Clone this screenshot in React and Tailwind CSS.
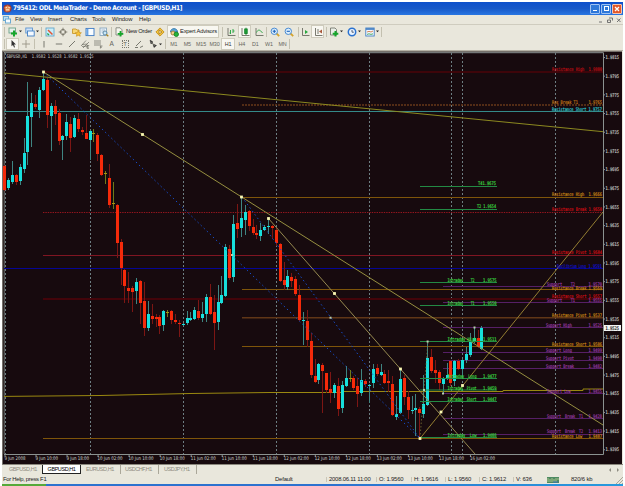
import React from "react";

// candle rows: high, body top, body bottom, low, colour (c = up, r = down, y = doji)
const CANDLES = `
165 166 190 191 r|178 180 188 190 c|161 175 182 184 c|174 175 182 185 r|164 167 181 185 c|138 153 169 173 c
82 116 152 165 c|93 103 117 147 c|95 104 107 109 r|87 90 110 118 c|72 79 90 91 c|78 80 115 128 r
103 106 116 151 c|100 106 114 125 r|109 113 141 145 r|135 136 140 160 c|114 122 136 140 c|117 124 138 152 r
115 118 137 138 c|113 119 129 132 r|127 130 132 135 r|115 133 139 139 r|130 131 140 160 c|129 133 134 142 y
133 135 154 161 r|154 155 175 176 r|171 173 174 184 y|164 178 205 208 r|182 203 204 209 y|204 205 243 258 r
239 242 268 285 r|269 270 286 303 r|272 288 291 303 r|286 288 292 312 r|278 282 291 304 c|280 281 303 324 r
282 301 328 336 r|301 314 328 331 c|304 316 319 324 r|314 317 319 327 r|315 317 326 334 r|310 311 325 331 c
310 312 313 317 y|310 311 320 324 r|314 320 322 324 r|320 323 324 337 r|323 324 325 326 c|311 318 323 325 c
312 318 320 321 c|307 310 319 320 c|300 311 318 320 r|302 314 318 322 c|294 297 314 322 c|284 297 314 315 r
295 312 323 350 r|285 302 322 330 c|276 295 303 304 c|244 247 296 297 c|245 249 278 280 r|215 224 277 282 c
204 223 229 238 r|197 218 228 237 c|205 212 220 235 c|210 211 226 231 r|219 227 233 235 r|225 233 235 239 r
223 230 236 241 c|225 227 230 231 c|218 226 227 234 c|225 226 228 239 r|228 230 243 246 r|243 244 281 282 r
262 280 285 290 r|270 276 287 290 c|273 277 281 287 r|276 279 294 296 r|285 295 320 321 r|312 320 321 345 c
310 321 340 347 r|333 341 375 378 r|359 376 382 383 r|363 364 380 384 c|363 365 371 413 r|373 373 390 393 r
372 389 393 403 r|383 385 393 398 c|378 386 409 416 r|381 385 408 413 c|366 378 386 387 c|370 378 379 382 y
376 378 388 390 r|378 386 394 407 r|369 380 393 396 c|379 381 384 387 r|384 385 386 403 c|364 369 383 388 c
364 368 374 376 r|364 372 375 376 c|370 374 383 384 r|370 381 383 392 r|376 384 415 416 r|396 414 417 420 c
369 379 413 414 c|375 378 397 405 r|391 397 410 419 r|396 410 411 414 c|394 408 410 436 c|407 409 413 438 r
375 404 414 418 c|341 358 405 406 c|349 357 371 373 r|360 370 373 383 r|370 372 383 390 r|377 379 384 394 c
363 375 379 380 c|360 361 383 386 r|360 361 381 386 c|359 361 369 370 r|359 360 369 378 c|347 354 360 363 c
333 342 355 357 c|327 338 342 343 c|330 338 347 348 r|326 328 349 350 c`
  .trim()
  .split(/[|\n]/)
  .map((row) => {
    const [high, top, bottom, low, kind] = row.split(" ");
    return { high: +high, top: +top, bottom: +bottom, low: +low, kind };
  });

const BODY = { c: "#17dfdc", r: "#f52a0a", y: "#a8960f" };
const WICK = { c: "#3f8582", r: "#7c1614", y: "#6f7a18" };

// y, x start, colour, thickness, dash
const LEVELS = [
  [72, 43, "#4c040a", 1.6],
  [105, 242, "#67391a", 1.3, "2 1"],
  [111.5, 4, "#348a89", 1],
  [197.5, 242, "#7f550a", 1],
  [212.5, 43, "#94151e", 1, "1.4 1"],
  [255.5, 43, "#801522", 1],
  [268.5, 4, "#050594", 1.2],
  [289.5, 242, "#7f550a", 1],
  [299, 43, "#43040a", 2],
  [317.7, 242, "#603617", 1.5],
  [346.5, 242, "#7f550a", 1],
  [438.5, 43, "#7f550a", 1]
];

const RIGHT_LABELS = [
  [71, 552, "Resistance High", "1.9800", "#b80a12"],
  [104, 552, "Res Break T1", "1.9765", "#c07416"],
  [110.5, 552, "Resistance Short", "1.9757", "#2bc0c8"],
  [196.3, 552, "Resistance High", "1.9666", "#c68214"],
  [211.3, 552, "Resistance Break", "1.9650", "#c80a12"],
  [254.3, 552, "Resistance Pivot", "1.9604", "#c80a12"],
  [267.5, 557, "Equilibrium Long", "1.9591", "#1010c4"],
  [285.7, 547, "Support    T2", "1.9570", "#93389f"],
  [289.8, 552, "Resistance Break", "1.9569", "#c68214"],
  [298, 552, "Resistance Short", "1.9557", "#c80a12"],
  [302, 547, "Support    T1", "1.9555", "#93389f"],
  [317, 552, "Resistance Pivot", "1.9537", "#c68214"],
  [326.5, 546, "Support High", "1.9525", "#93389f"],
  [345.7, 552, "Resistance Short", "1.9506", "#c68214"],
  [352, 546, "Support Long", "1.9499", "#93389f"],
  [359.5, 546, "Support Pivot", "1.9490", "#93389f"],
  [367.5, 546, "Support Break", "1.9482", "#93389f"],
  [392.5, 547, "Support Low", "1.9455", "#93389f"],
  [417.5, 547, "Support  Break  T1", "1.9428", "#93389f"],
  [433.3, 547, "Support  Break  T2", "1.9413", "#93389f"],
  [438, 552, "Resistance Low", "1.9407", "#c68214"]
];

const INTRADAY = [
  [282.5, "Intraday    T2", "1.9575"],
  [305.5, "Intraday    T1", "1.9550"],
  [341.5, "Intraday High", "1.9511"],
  [378.5, "Intraday  Long", "1.9477"],
  [390, "Intraday  Pivot", "1.9459"],
  [401.5, "Intraday  Short", "1.9447"],
  [437.5, "Intraday  Low", "1.9408"]
];

const SUPPORTS = [286.5, 302.5, 327.5, 352.5, 360.5, 368.5, 393.5, 418.5, 434.5];
const SEPARATORS = [5.5, 90.5, 183.5, 276.5, 369.5, 451.5, 462.5, 555.5];

const TIMES = [
  "9 Jun 2008", "9 Jun 10:00", "9 Jun 18:00", "10 Jun 02:00", "10 Jun 10:00", "10 Jun 18:00",
  "11 Jun 02:00", "11 Jun 10:00", "11 Jun 18:00", "12 Jun 02:00", "12 Jun 10:00", "12 Jun 18:00",
  "13 Jun 02:00", "13 Jun 10:00", "13 Jun 18:00", "16 Jun 02:00"
];

const HANDLES = [[43.5, 72], [142.5, 134.5], [241.5, 197], [268.5, 218.5], [334.5, 293.5], [400.5, 369], [420, 438.5], [441, 412], [462.5, 385.5]];
const SMALL_HANDLES = [[232, 255], [330.5, 317.7], [427.6, 341.5], [474.5, 327.5], [424, 390], [443, 393.5]];

function Label({ x, y, w, fill, weight = 0.2, children }) {
  return (
    <text
      x={x}
      y={y}
      fontSize="4.9"
      fill={fill}
      stroke={fill}
      strokeWidth={weight}
      textLength={w}
      lengthAdjust="spacingAndGlyphs"
      xmlSpace="preserve"
    >
      {children}
    </text>
  );
}

function Chart() {
  return (
    <svg viewBox="2 51 620 413" className="block h-[413px] w-[620px]" fontFamily="'DejaVu Sans Mono', monospace">
      <rect x="2" y="51" width="620" height="413" fill="#170a0e" />
      <path d="M2 51.5H622M2.5 51V464" stroke="#75706a" />
      <path d="M4 52.7H603.5V454.5H4" fill="none" stroke="#8b9290" />
      <path d="M4.2 52V454" stroke="#99a19b" strokeWidth="0.7" />

      {SEPARATORS.map((x) => (
        <line key={x} x1={x} x2={x} y1="53" y2="454" stroke="#6d7e82" strokeWidth="1" strokeDasharray="2 2" />
      ))}

      {LEVELS.map(([y, x, stroke, width, dash]) => (
        <line key={y} x1={x} x2="603" y1={y} y2={y} stroke={stroke} strokeWidth={width} strokeDasharray={dash} />
      ))}
      {SUPPORTS.map((y) => (
        <line key={y} x1="443" x2="603" y1={y} y2={y} stroke="#561f66" />
      ))}
      <path d="M4 396.4L100 395.5L190 393.5L270 392.5H343V391.5H503V390.5H583V389H603" fill="none" stroke="#9a8810" />

      <g shapeRendering="crispEdges">
        {CANDLES.map((candle, i) => {
          const x = Math.round(4.7 + i * 3.88 - 0.5);
          return (
            <g key={i}>
              <rect
                x={x}
                y={candle.high}
                width="1"
                height={candle.low - candle.high}
                fill={WICK[candle.kind]}
              />
              <rect
                x={x - 1}
                y={candle.top}
                width={candle.kind === "y" ? 3 : 2.6}
                height={Math.max(1, candle.bottom - candle.top)}
                fill={BODY[candle.kind]}
              />
            </g>
          );
        })}
      </g>

      <g fill="none" strokeWidth="1">
        <path d="M4 73L603 131.7" stroke="#8c8920" />
        <path d="M43.5 72L603 425" stroke="#968f40" />
        <path d="M268.5 218.5L475 454" stroke="#968950" />
        <path d="M420 438.5L603 212" stroke="#947e32" />
        <path d="M43.5 72L420 438.5M242 197L420 438.5" stroke="#164cc8" strokeDasharray="1.5 2.8" />
        <path d="M420 438L428 341" stroke="#86803a" strokeDasharray="1.5 2" strokeWidth="0.7" />
      </g>

      {[186.5, 209.5, ...INTRADAY.map((row) => row[0])].map((y) => (
        <line key={y} x1="420" x2="497" y1={y} y2={y} stroke="#238a44" />
      ))}
      <Label x={478} y={185.3} w={18} fill="#3ad440">T41.9675</Label>
      <Label x={477} y={208.3} w={19} fill="#3ad440">T2 1.9654</Label>
      {INTRADAY.map(([y, name, price]) => (
        <g key={name}>
          <Label x={447.5} y={y - 0.5} w={name.includes(" T") ? 27 : 29} fill="#3ad440">{name}</Label>
          <Label x={483} y={y - 0.5} w={13.5} fill="#3ad440">{price}</Label>
        </g>
      ))}
      {RIGHT_LABELS.map(([y, x, name, price, fill]) => (
        <g key={y}>
          <Label x={x} y={y} w={Math.min(name.length * 2.15, x === 557 ? 29 : 36)} fill={fill}>{name}</Label>
          <Label x={588.5} y={y} w={13.5} fill={fill}>{price}</Label>
        </g>
      ))}

      {HANDLES.map(([x, y]) => (
        <rect key={x} x={x - 1.4} y={y - 1.4} width="2.8" height="2.8" fill="#fbf9b4" />
      ))}
      {SMALL_HANDLES.map(([x, y]) => (
        <rect key={x} x={x - 1} y={y - 1} width="2" height="2" fill="#b9cdb0" />
      ))}

      <Label x={6.5} y={58.3} w={87} fill="#b4b8b4" weight={0.1}>GBPUSD,H1  1.9502 1.9528 1.9502 1.9525</Label>

      {Array.from({ length: 22 }, (_, i) => (
        <g key={i}>
          <path d={`M603 ${57.5 + i * 18.68}h2`} stroke="#8b9290" />
          <Label x={605.5} y={59.2 + i * 18.68} w={13.5} fill="#c8ccc8" weight={0.15}>
            {(1.9815 - i * 0.002).toFixed(4)}
          </Label>
        </g>
      ))}
      <rect x="604" y="325" width="17" height="6" fill="#f4f4f4" />
      <Label x={605.5} y={329.8} w={13.5} fill="#111">1.9525</Label>

      <g fontFamily="'DejaVu Sans Condensed', 'DejaVu Sans', sans-serif">
        {TIMES.map((time, i) => (
          <g key={time}>
            <path d={`M${5 + i * 31.03} 454v3`} stroke="#8b9290" />
            <Label x={4.5 + i * 31.03} y={460.4} w={i === 0 ? 21 : i < 3 ? 22.5 : 25} fill="#c0c4c0" weight={0.05}>
              {time}
            </Label>
          </g>
        ))}
      </g>
    </svg>
  );
}

function Icon({ children }) {
  return (
    <svg viewBox="0 0 10 10" className="h-[10px] w-[10px] shrink-0" fill="none" stroke="#6b6c62" strokeWidth="0.9">
      {children}
    </svg>
  );
}

function Cell({ className = "", children }) {
  return <div className={"flex h-full shrink-0 items-center justify-center " + className}>{children}</div>;
}

function Caret() {
  return (
    <svg viewBox="0 0 4 3" className="ml-px h-[3px] w-[3px] shrink-0">
      <path d="M0 0H4L2 2.5Z" fill="#222" />
    </svg>
  );
}

function Divider({ className = "" }) {
  return <div className={"h-[10px] w-px shrink-0 bg-[#c3c0b0] " + className} />;
}

const PRESSED = "border border-[#cfccbd] bg-[#f8f7f1]";

function MainToolbar() {
  return (
    <div className="flex h-[14px] items-center border-t border-[#cfccbf] text-[5.8px] tracking-[-0.22px]">
      <Divider className="ml-[2px] mr-[2px]" />
      <Cell className="w-[16px]">
        <Icon>
          <rect x="1" y="1" width="6.5" height="5" fill="#e7f1ec" stroke="#69a189" />
          <path d="M6 3.5V9.5M3 6.5H9" stroke="#16a62b" strokeWidth="2" />
        </Icon>
        <Caret />
      </Cell>
      <Cell className="w-[17px]">
        <Icon>
          <rect x="0.8" y="1" width="6.7" height="5" fill="#cfe3fa" stroke="#5e94cf" />
          <rect x="2.5" y="4" width="6.7" height="5" fill="#f4f9ff" stroke="#427fc4" />
        </Icon>
        <Caret />
      </Cell>
      <Divider className="ml-[1px] mr-[1px]" />
      <Cell className="w-[13px]">
        <Icon>
          <rect x="1" y="1" width="8" height="8" fill="#c9eefa" stroke="#67a6c9" />
          <path d="M3 3L7.5 7.5" stroke="#e25535" strokeWidth="1.5" />
          <path d="M2.3 6.5L4 8" stroke="#21a54d" strokeWidth="1.3" />
        </Icon>
      </Cell>
      <Cell className="w-[14px]">
        <Icon>
          <circle cx="5" cy="5" r="2.6" stroke="#777468" />
          <path d="M5 0.7V4M5 6V9.3M0.7 5H4M6 5H9.3" stroke="#777468" />
        </Icon>
      </Cell>
      <Cell className="w-[13px]">
        <Icon>
          <path d="M0.5 2H4L5 3H7V6.5H0.5Z" fill="#f7d774" stroke="#c8992d" />
          <path d="M6.3 3.6L7.2 5.5L9.4 5.8L7.8 7.2L8.2 9.3L6.3 8.3L4.4 9.3L4.8 7.2L3.2 5.8L5.4 5.5Z" fill="#f8c537" stroke="#c58b1f" strokeWidth="0.6" />
        </Icon>
      </Cell>
      <Cell className="w-[14px]">
        <Icon>
          <rect x="1" y="1.4" width="8" height="7.2" fill="#fafdff" stroke="#3b78c4" />
          <path d="M2.4 2V8" stroke="#69a4e4" strokeWidth="2" />
        </Icon>
      </Cell>
      <Cell className="w-[13px]">
        <Icon>
          <rect x="1" y="1" width="6.5" height="7.5" fill="#edf5fb" stroke="#8aa7bd" />
          <path d="M2.5 3H6M2.5 5H5" stroke="#8aa7bd" strokeWidth="0.7" />
          <circle cx="6" cy="6" r="2" fill="#c9e8f8" stroke="#55809d" />
          <path d="M7.4 7.4L9.3 9.3" stroke="#ad831d" strokeWidth="1.3" />
        </Icon>
      </Cell>
      <Divider className="ml-[1px] mr-[2px]" />
      <Cell className="w-[38px] gap-[2px] whitespace-nowrap">
        <Icon>
          <path d="M2 0.8H6L8 2.8V8H2Z" fill="#f6f6ef" stroke="#85867d" />
          <path d="M6.5 4V9.5M3.7 6.8H9.3" stroke="#16a62b" strokeWidth="1.8" />
        </Icon>
        New Order
      </Cell>
      <Cell className="w-[15px]">
        <Icon>
          <path d="M5 0.9L9.1 5L5 9.1L0.9 5Z" fill="#f4c63e" stroke="#c48e17" />
          <path d="M4 3L7 5L4 7Z" fill="#f9e7a8" stroke="#8f5f13" strokeWidth="0.6" />
        </Icon>
      </Cell>
      <Cell className={"w-[52px] gap-[1px] whitespace-nowrap " + PRESSED}>
        <Icon>
          <path d="M1.5 5C1.5 0.5 8.5 0.5 8.5 5Z" fill="#57a8de" stroke="#2c70a3" />
          <circle cx="4" cy="6" r="2" fill="#f3d08b" stroke="#9c7a38" />
          <circle cx="7.3" cy="7.3" r="2.2" fill="#26b23a" stroke="#158826" />
        </Icon>
        Expert Advisors
      </Cell>
      <Divider className="ml-[3px] mr-[2px]" />
      <Cell className="w-[12px]">
        <Icon>
          <path d="M2 1V8.5H9.5" />
          <path d="M4.5 3V7M7 2V6M7 4H8.5M3.5 6H4.5" stroke="#1da33a" />
        </Icon>
      </Cell>
      <Cell className={"ml-px w-[13px] " + PRESSED}>
        <Icon>
          <path d="M2 1V8.5H9.5" />
          <rect x="4.7" y="2" width="2.5" height="4.5" fill="#29b444" stroke="#15842b" />
          <path d="M6 0.7V8" stroke="#15842b" />
        </Icon>
      </Cell>
      <Cell className="w-[15px]">
        <Icon>
          <path d="M2 1V8.5H9.5" />
          <path d="M2.5 5.5C4 2 6 2.5 8.5 6" stroke="#27a442" />
        </Icon>
      </Cell>
      <Divider className="mr-px" />
      <Cell className="w-[14px]">
        <Icon>
          <path d="M6.4 6.4L9.2 9.2" stroke="#d5a32a" strokeWidth="1.8" />
          <circle cx="4.3" cy="4.3" r="3.2" fill="#dceffd" stroke="#3b80cd" />
          <path d="M4.3 2.7V5.9M2.7 4.3H5.9" stroke="#1e64bd" strokeWidth="1.1" />
        </Icon>
      </Cell>
      <Cell className="w-[13px]">
        <Icon>
          <path d="M6.4 6.4L9.2 9.2" stroke="#d5a32a" strokeWidth="1.8" />
          <circle cx="4.3" cy="4.3" r="3.2" fill="#dceffd" stroke="#3b80cd" />
          <path d="M2.7 4.3H5.9" stroke="#1e64bd" strokeWidth="1.1" />
        </Icon>
      </Cell>
      <Divider className="ml-[3px]" />
      <Cell className="w-[12px]">
        <Icon>
          <path d="M2.5 1V8.5H9.5" />
          <path d="M5 3L8 5L5 7Z" fill="#25a73d" stroke="none" />
        </Icon>
      </Cell>
      <Cell className={"w-[13px] " + PRESSED}>
        <Icon>
          <path d="M2.5 1V8.5H9.5M5 2V7" />
          <path d="M9 2.5L6 4.5L9 6.5Z" fill="#a9583a" stroke="none" />
        </Icon>
      </Cell>
      <Divider className="ml-[2px] mr-[1px]" />
      <Cell className="w-[16px]">
        <Icon>
          <path d="M1.5 1H6L7.5 2.5V8H1.5Z" fill="#e9eee6" stroke="#77786f" />
          <path d="M6.5 4V9.5M3.7 6.8H9.3" stroke="#16a62b" strokeWidth="2" />
        </Icon>
        <Caret />
      </Cell>
      <Cell className="ml-px w-[17px]">
        <Icon>
          <circle cx="5" cy="5" r="3.7" fill="#eaf4ff" stroke="#2a72d0" strokeWidth="1.5" />
          <path d="M5 3V5.2H6.8" stroke="#41516b" />
        </Icon>
        <Caret />
      </Cell>
      <Cell className="ml-px w-[17px]">
        <Icon>
          <rect x="0.8" y="1" width="8.4" height="8" fill="#f4f9ff" stroke="#427fc4" />
          <path d="M1 2H9" stroke="#427fc4" strokeWidth="1.7" />
          <path d="M2 5L4 4.4L6 5L8 4" stroke="#cf7445" />
          <path d="M2 7.4L4 6.8L6 7.4L8 6.8" stroke="#3ba158" />
        </Icon>
        <Caret />
      </Cell>
      <Divider className="ml-[1px]" />
    </div>
  );
}

const PERIODS = ["M1", "M5", "M15", "M30", "H1", "H4", "D1", "W1", "MN"];

function LineToolbar() {
  return (
    <div className="flex h-[12px] items-center text-[5.4px] tracking-[-0.1px] text-[#66665d]">
      <Divider className="ml-[2px]" />
      <Cell className={"ml-px w-[13px] " + PRESSED}>
        <Icon>
          <path d="M3.5 1L3.5 7.3L5 6L6 8.6L7 8.2L6 5.6H8Z" fill="#333" stroke="none" />
        </Icon>
      </Cell>
      <Cell className="w-[14px]"><Icon><path d="M5 1V9M1 5H9" stroke="#999487" /></Icon></Cell>
      <Divider className="mx-px" />
      <Cell className="w-[15px]"><Icon><path d="M5 2V8.5" /></Icon></Cell>
      <Cell className="w-[15px]"><Icon><path d="M1.8 5H8.2" /></Icon></Cell>
      <Cell className="w-[12px]"><Icon><path d="M2 8L8 2" /></Icon></Cell>
      <Cell className="w-[13px]"><Icon><path d="M1 7L6 1.5M3 9L9 3M2 5.5L7.5 5M2 7.5L8 7" strokeWidth="0.7" /><path d="M7 6.5H9.2M7 6.5V9.3H9M7 8H8.8" strokeWidth="0.7" /></Icon></Cell>
      <Cell className="w-[14px]"><Icon><path d="M1 2H8M1 4H8M1 6H8" strokeWidth="0.7" /><path d="M7.4 9.5V7H9.5M7.4 8.2H9" strokeWidth="0.7" /></Icon></Cell>
      <Cell className="w-[13px] text-[6.5px]">A</Cell>
      <Cell className="w-[14px]"><span className="flex h-[8px] w-[7px] items-center justify-center border border-dotted border-[#77776d] text-[6px]">T</span></Cell>
      <Cell className="w-[14px]"><Icon><path d="M2 7L7 2M1 8.5H4M6 8.5L9 7" /></Icon></Cell>
      <Cell className="w-[17px]">
        <Icon><path d="M2 1L5 3L3 5Z M5 5L8.5 6.5L6 8.5Z" fill="#333" stroke="#333" strokeWidth="0.5" /><path d="M3 3L7 7" /></Icon>
        <Caret />
      </Cell>
      <Divider className="ml-[2px] mr-px" />
      {PERIODS.map((period) => (
        <Cell key={period} className={period === "H1" ? "w-[13.6px] text-[#333] " + PRESSED : "w-[13.6px]"}>
          {period}
        </Cell>
      ))}
      <Divider />
    </div>
  );
}

function TitleBar() {
  return (
    <div className="flex h-[13px] items-center bg-linear-to-b from-[#0d50cc] via-[#1758c8] to-[#2876e2] pl-[1px] pr-[1px] text-white">
      <svg viewBox="0 0 10 10" className="h-[9px] w-[9px]">
        <circle cx="5" cy="5" r="4.5" fill="#a3362c" />
        <path d="M1.5 3.5L5 1.5L8.5 3.5L7.5 8L3 8.5Z" fill="#e58a54" />
        <path d="M3 4H4.5M6 4H7.5M3.3 6.5H6.8" stroke="#fff3d8" />
      </svg>
      <div className="ml-[1px] flex-1 whitespace-pre font-['DejaVu_Sans_Condensed','DejaVu_Sans',sans-serif] text-[6.5px] font-bold leading-none tracking-[-0.34px]">
        795412: ODL MetaTrader - Demo Account - [GBPUSD,H1]
      </div>
      <div className="flex gap-[1px]">
        <div className="flex h-[10px] w-[10px] items-end rounded-[1px] border border-[#9fc3f3] bg-[#2f78d8] p-[1.5px]">
          <div className="h-[1.5px] w-[4px] bg-white" />
        </div>
        <div className="flex h-[10px] w-[10px] items-center justify-center rounded-[1px] border border-[#9fc3f3] bg-[#2f78d8]">
          <div className="h-[5px] w-[5px] border border-white" />
        </div>
        <div className="flex h-[10px] w-[10px] items-center justify-center rounded-[1px] border border-[#f4c4ae] bg-[#e2572a]">
          <svg viewBox="0 0 6 6" className="h-[6px] w-[6px]" stroke="#fff" strokeWidth="1.3">
            <path d="M1 1L5 5M5 1L1 5" />
          </svg>
        </div>
      </div>
    </div>
  );
}

function MenuBar() {
  return (
    <div className="flex h-[9px] items-center text-[5.9px] leading-none tracking-[-0.1px]">
      <svg viewBox="0 0 8 8" className="ml-[1px] h-[8px] w-[8px]">
        <rect x="0.5" y="0.5" width="5" height="4" fill="#bfe1f7" stroke="#6ba9d2" />
        <rect x="2.5" y="3" width="5" height="4" fill="#f6fcff" stroke="#6ba9d2" />
      </svg>
      <div className="w-[15px] pl-[4px]">File</div>
      <div className="w-[18px] pl-[4px]">View</div>
      <div className="w-[22px] pl-[4px]">Insert</div>
      <div className="w-[22px] pl-[4px]">Charts</div>
      <div className="w-[20px] pl-[4px]">Tools</div>
      <div className="w-[27px] pl-[4px]">Window</div>
      <div className="pl-[4px]">Help</div>
      <svg viewBox="0 0 24 8" className="ml-auto mr-[1px] h-[8px] w-[24px]" fill="none" stroke="#666" strokeWidth="0.9">
        <path d="M1 6H4M11 2H14.5V4.5M9.5 4H12.5V6.5H9.5ZM19 2.5L22.5 6M22.5 2.5L19 6" />
      </svg>
    </div>
  );
}

function TabStrip() {
  return (
    <div className="flex h-[11px] items-start border-t border-[#8a877d] text-[5.5px] leading-[9px] tracking-[-0.44px] text-[#8d8b80]">
      <div className="w-[40px] pl-[7px]">GBPUSD,H1</div>
      <div className="h-[9px] w-[39px] border border-t-0 border-[#222] bg-white text-center leading-[8px] text-black">GBPUSD,H1</div>
      <div className="w-[39px] pl-[5px]">EURUSD,H1</div>
      <div className="w-[38px] border-l border-[#aaa799] pl-[4px]">USDCHF,H1</div>
      <div className="w-[39px] border-x border-[#aaa799] pl-[5px]">USDJPY,H1</div>
      <svg viewBox="0 0 14 6" className="ml-auto mr-[2px] mt-[2px] h-[6px] w-[14px]">
        <path d="M4 1V5L2 3ZM10 1V5L12 3Z" fill="#8d8b80" />
      </svg>
    </div>
  );
}

function StatusBar() {
  return (
    <div className="flex h-[9px] items-center whitespace-nowrap text-[5.9px] leading-none tracking-[-0.16px]">
      <div className="w-[271px] pl-px tracking-[-0.3px]">For Help, press F1</div>
      <div className="w-[53px] pl-[2px]">Default</div>
      <div className="w-[50px] border-l border-[#c9c6b7] pl-[2px] tracking-[-0.22px]">2008.06.11 11:00</div>
      <div className="w-[35px] border-l border-[#c9c6b7] pl-[2px]">O: 1.9560</div>
      <div className="w-[34px] border-l border-[#c9c6b7] pl-[2px]">H: 1.9616</div>
      <div className="w-[34px] border-l border-[#c9c6b7] pl-[2px]">L: 1.9560</div>
      <div className="w-[34px] border-l border-[#c9c6b7] pl-[2px]">C: 1.9612</div>
      <div className="w-[31px] border-l border-[#c9c6b7] pl-[2px]">V: 636</div>
      <svg viewBox="0 0 12 6" className="ml-[3px] h-[6px] w-[12px]">
        <rect width="12" height="6" fill="#4e8a62" />
        <path d="M1 1V5M3 2V5M5 1V5M7 2V5M9 1V5M11 1V3" stroke="#d7dda0" strokeWidth="0.7" />
        <path d="M6 5H11" stroke="#3b73b5" />
      </svg>
      <div className="ml-[12px]">820/6 kb</div>
      <svg viewBox="0 0 8 8" className="ml-auto h-[8px] w-[8px]" stroke="#aaa799">
        <path d="M1 8L8 1M4 8L8 4M7 8L8 7" />
      </svg>
    </div>
  );
}

export default function App() {
  return (
    <div className="h-[486px] w-[625px] overflow-hidden bg-white px-[2px] pt-[2px] font-['Liberation_Sans',Arial,sans-serif] text-[#222]">
      <div className="flex h-[484px] w-[621px] flex-col bg-[#e9e7dc]">
        <TitleBar />
        <MenuBar />
        <MainToolbar />
        <LineToolbar />
        <div className="h-px shrink-0 bg-[#b5b1a4]" />
        <Chart />
        <TabStrip />
        <StatusBar />
        <div className="flex h-[2px] shrink-0">
          <div className="w-[44px] bg-[#56a93a]" />
          <div className="flex-1 bg-linear-to-r from-[#2c72cf] via-[#2c72cf] to-[#279bdd]" />
        </div>
      </div>
    </div>
  );
}
